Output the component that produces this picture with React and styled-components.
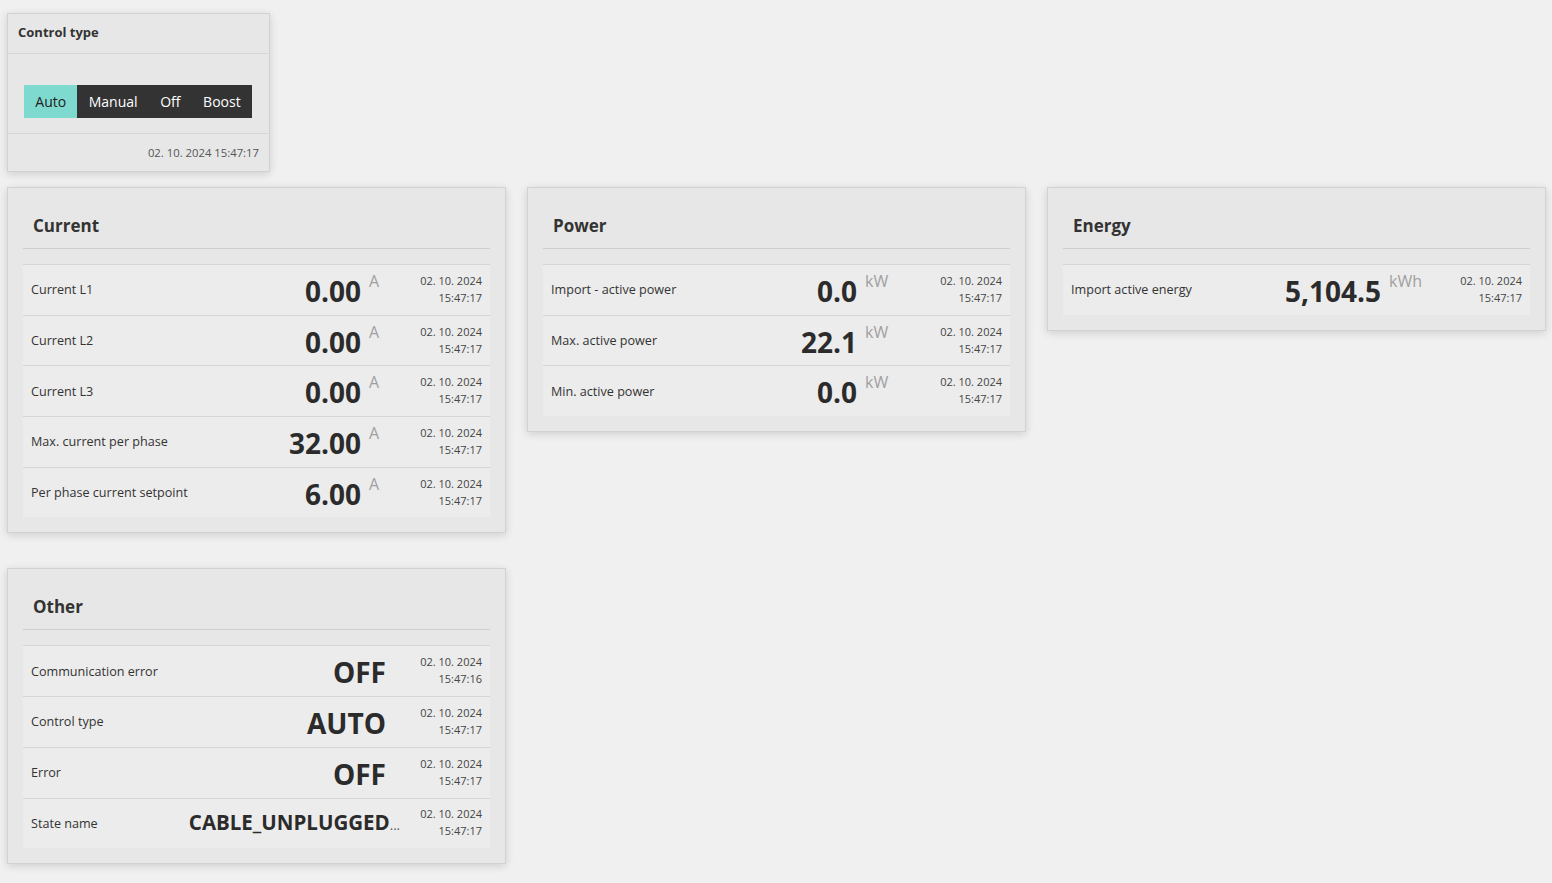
import React from "react";
import styled, { createGlobalStyle } from "styled-components";

const GlobalStyle = createGlobalStyle`
  html, body {
    margin: 0;
    padding: 0;
    background: #f0f0f0;
    font-family: "Open Sans", "Noto Sans", "Liberation Sans", sans-serif;
    color: #333333;
  }
  * {
    box-sizing: border-box;
  }
`;

const STAMP = ["02. 10. 2024", "15:47:17"];

const cards = [
  {
    title: "Current",
    unitWidth: 58,
    rows: [
      { label: "Current L1", value: "0.00", unit: "A" },
      { label: "Current L2", value: "0.00", unit: "A" },
      { label: "Current L3", value: "0.00", unit: "A" },
      { label: "Max. current per phase", value: "32.00", unit: "A" },
      { label: "Per phase current setpoint", value: "6.00", unit: "A" },
    ],
  },
  {
    title: "Power",
    unitWidth: 82,
    rows: [
      { label: "Import - active power", value: "0.0", unit: "kW" },
      { label: "Max. active power", value: "22.1", unit: "kW" },
      { label: "Min. active power", value: "0.0", unit: "kW" },
    ],
  },
  {
    title: "Energy",
    unitWidth: 78,
    rows: [{ label: "Import active energy", value: "5,104.5", unit: "kWh" }],
  },
  {
    title: "Other",
    unitWidth: 33,
    rows: [
      { label: "Communication error", value: "OFF", time: "15:47:16" },
      { label: "Control type", value: "AUTO" },
      { label: "Error", value: "OFF" },
      { label: "State name", value: "CABLE_UNPLUGGED", cut: true },
    ],
  },
];

const modes = ["Auto", "Manual", "Off", "Boost"];

const App = () => {
  return (
    <Page>
      <GlobalStyle />
      <ControlCard>
        <ControlHeader>Control type</ControlHeader>
        <ControlBody>
          <ButtonGroup>
            {modes.map((m) => (
              <ModeButton key={m} $active={m === "Auto"}>
                {m}
              </ModeButton>
            ))}
          </ButtonGroup>
        </ControlBody>
        <ControlFooter>02. 10. 2024 15:47:17</ControlFooter>
      </ControlCard>

      <CardGrid>
        {cards.map((card) => (
          <Card key={card.title}>
            <CardTitle>{card.title}</CardTitle>
            <Table>
              {card.rows.map((row) => (
                <Row key={row.label} $unitWidth={card.unitWidth}>
                  <Label>{row.label}</Label>
                  <Value $small={row.cut}>
                    {row.value}
                    {row.cut && <Ellipsis>...</Ellipsis>}
                  </Value>
                  <Unit>{row.unit}</Unit>
                  <Stamp>
                    <span>{STAMP[0]}</span>
                    <span>{row.time || STAMP[1]}</span>
                  </Stamp>
                </Row>
              ))}
            </Table>
          </Card>
        ))}
      </CardGrid>
    </Page>
  );
};

export default App;

const Page = styled.div`
  padding: 13px 6px 20px 7px;
  min-height: 100vh;
`;

const ControlCard = styled.div`
  width: 263px;
  height: 159px;
  display: flex;
  flex-direction: column;
  background: #e7e7e7;
  border: 1px solid #d2d2d2;
  box-shadow: 0 2px 8px rgba(0, 0, 0, 0.14);
  margin-bottom: 15px;
`;

const ControlHeader = styled.div`
  height: 40px;
  padding: 0 10px 3px;
  display: flex;
  align-items: center;
  font-size: 13px;
  font-weight: 700;
  border-bottom: 1px solid #d6d6d6;
`;

const ControlBody = styled.div`
  flex: 1;
  display: flex;
  align-items: flex-end;
  padding: 0 16px 15px;
  border-bottom: 1px solid #d6d6d6;
`;

const ButtonGroup = styled.div`
  display: flex;
  height: 33px;
  background: #333333;
`;

const ModeButton = styled.div`
  display: flex;
  align-items: center;
  padding: 0 11.3px;
  font-size: 14px;
  color: ${(p) => (p.$active ? "#222" : "#ffffff")};
  background: ${(p) => (p.$active ? "#7ed9cf" : "transparent")};
`;

const ControlFooter = styled.div`
  height: 37px;
  padding: 0 10px;
  display: flex;
  align-items: center;
  justify-content: flex-end;
  font-size: 11.3px;
  color: #555555;
`;

const CardGrid = styled.div`
  display: grid;
  grid-template-columns: repeat(3, 499px);
  column-gap: 21px;
  row-gap: 35px;
  align-items: start;
`;

const Card = styled.div`
  background: #e7e7e7;
  border: 1px solid #d2d2d2;
  box-shadow: 0 2px 8px rgba(0, 0, 0, 0.14);
  padding: 15px;
`;

const CardTitle = styled.div`
  height: 46px;
  padding: 0 10px;
  display: flex;
  align-items: center;
  font-size: 17px;
  font-weight: 700;
  color: #333333;
  border-bottom: 1px solid #cfcfcf;
  margin-bottom: 15px;
`;

const Table = styled.div`
  display: flex;
  flex-direction: column;
`;

const Row = styled.div`
  display: grid;
  grid-template-columns: 1fr auto ${(p) => p.$unitWidth}px 71px;
  height: 50.7px;
  border-top: 1px solid #d6d6d6;
  background: #ececec;
`;

const Label = styled.div`
  align-self: center;
  padding-left: 8px;
  font-size: 12.6px;
  color: #333333;
  white-space: nowrap;
`;

const Value = styled.div`
  align-self: center;
  white-space: nowrap;
  font-size: ${(p) => (p.$small ? "20.5px" : "28px")};
  font-weight: 700;
  line-height: 34px;
  color: #2b2b2b;
  padding-top: ${(p) => (p.$small ? "0" : "2px")};
`;

const Ellipsis = styled.span`
  display: inline-block;
  margin-right: -14px;
  font-size: 13px;
  font-weight: 400;
  color: #555555;
`;

const Unit = styled.div`
  padding: 6px 0 0 8px;
  font-size: 16px;
  line-height: 20px;
  color: #a0a0a0;
`;

const Stamp = styled.div`
  align-self: center;
  display: flex;
  flex-direction: column;
  align-items: flex-end;
  padding: 0 8px 2px 0;
  font-size: 11px;
  line-height: 17px;
  color: #444444;
`;
